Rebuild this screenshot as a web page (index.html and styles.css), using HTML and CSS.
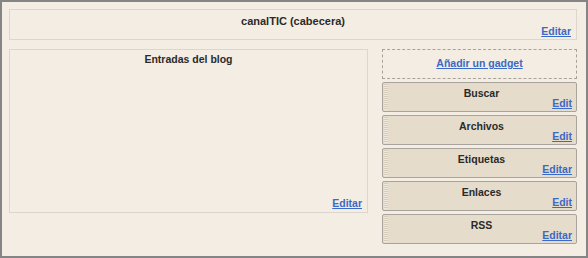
FILE: index.html
```html
<!DOCTYPE html>
<html lang="es">

<head>
    <meta charset="UTF-8">
    <meta name="viewport" content="width=device-width, initial-scale=1.0">
    <title>Diseño - canalTIC</title>
    <link rel="stylesheet" href="styles.css">
</head>

<body>
    <div class="layout">
        <!-- Cabecera -->
        <div class="section header">
            <div class="title">canalTIC (cabecera)</div>
            <a class="edit" href="#">Editar</a>
        </div>

        <div class="columns">
            <!-- Entradas -->
            <div class="section main">
                <div class="title">Entradas del blog</div>
                <a class="edit" href="#">Editar</a>
            </div>

            <!-- Sidebar -->
            <div class="sidebar">
                <div class="add-gadget"><a href="#">Añadir un gadget</a></div>

                <div class="widget">
                    <div class="title">Buscar</div>
                    <a class="edit" href="#">Edit</a>
                </div>
                <div class="widget">
                    <div class="title">Archivos</div>
                    <a class="edit" href="#">Edit</a>
                </div>
                <div class="widget">
                    <div class="title">Etiquetas</div>
                    <a class="edit" href="#">Editar</a>
                </div>
                <div class="widget">
                    <div class="title">Enlaces</div>
                    <a class="edit" href="#">Edit</a>
                </div>
                <div class="widget">
                    <div class="title">RSS</div>
                    <a class="edit" href="#">Editar</a>
                </div>
            </div>
        </div>
    </div>
</body>

</html>
```

FILE: styles.css
```css
body {
    margin: 0;
    font-family: "Liberation Sans", Arial, sans-serif;
    background: #f4ede4;
}

.layout {
    box-sizing: border-box;
    width: 588px;
    height: 258px;
    border: 2px solid #858585;
    background: #f4ede4;
    padding: 7px 9px 0 7px;
}

.title {
    text-align: center;
    font-size: 10.5px;
    font-weight: bold;
    color: #2a2a2a;
}

.edit {
    display: block;
    text-align: right;
    font-size: 10.5px;
    font-weight: bold;
    color: #3b69c6;
}

.section {
    box-sizing: border-box;
    border: 1px solid #dcd6cc;
}

.header {
    height: 31px;
    padding: 5px 5px 0 5px;
}

.header .title {
    font-size: 11px;
}

.header .edit {
    margin-top: -2px;
}

.columns {
    display: flex;
    gap: 14px;
    margin-top: 9px;
}

.main {
    width: 359px;
    height: 164px;
    padding: 3px 5px 3px 5px;
    display: flex;
    flex-direction: column;
    justify-content: space-between;
}

.sidebar {
    width: 195px;
    display: flex;
    flex-direction: column;
    gap: 3px;
}

.add-gadget {
    box-sizing: border-box;
    height: 30px;
    border: 1px dashed #aaa39a;
    text-align: center;
    padding-top: 3px;
}

.add-gadget a {
    font-size: 10.5px;
    font-weight: bold;
    color: #3b69c6;
}

.widget {
    position: relative;
    box-sizing: border-box;
    height: 30px;
    border: 1px solid #a8a39c;
    border-radius: 2px;
    background: #e6dccb;
    padding: 4px 4px 0 8px;
}

.widget::before {
    content: "";
    position: absolute;
    left: 1px;
    top: 1px;
    bottom: 1px;
    width: 4px;
    background: repeating-linear-gradient(to bottom, #d6ccbb 0 1px, #efe8dc 1px 2px);
}

.widget .edit {
    margin-top: -2px;
}
```
